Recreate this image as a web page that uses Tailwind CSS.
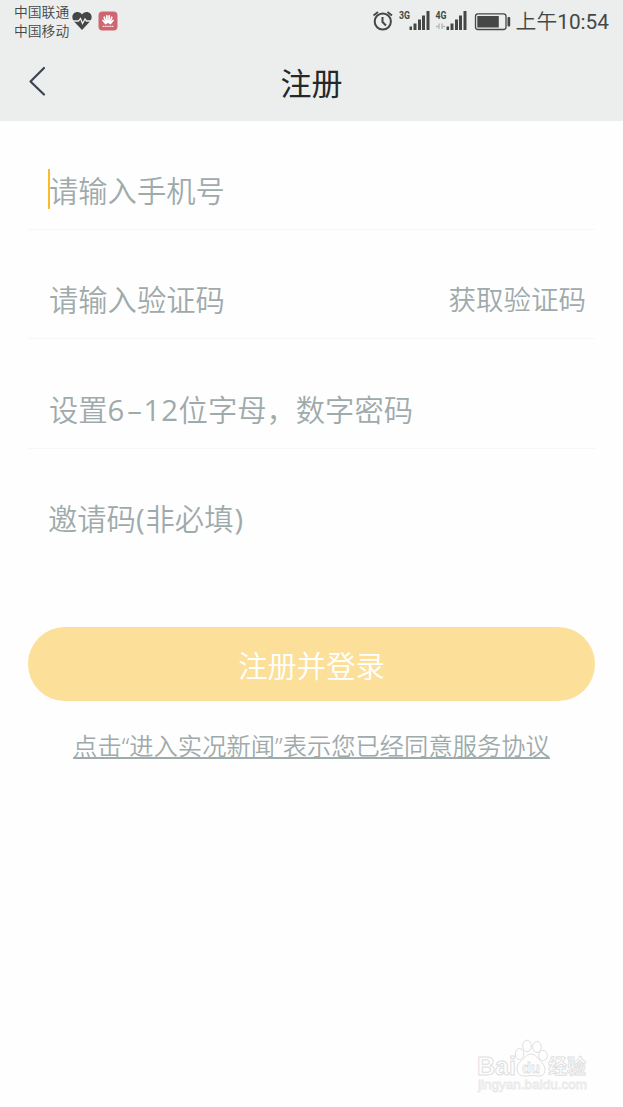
<!DOCTYPE html>
<html lang="zh-CN">
<head>
<meta charset="utf-8">
<title>注册</title>
<script src="https://cdn.jsdelivr.net/npm/@tailwindcss/browser@4"></script>
</head>
<body class="bg-[#fefefe] w-[623px] h-[1107px] overflow-hidden font-['Noto_Sans','Noto_Sans_CJK_SC',sans-serif] text-[#9faaab] whitespace-nowrap">
<header class="bg-[#ebeeed] h-[121px] flex flex-col">
  <div class="h-[42px] flex items-center justify-between pl-[14px] pr-[14px] text-[#454746]">
    <div class="flex items-center">
      <div class="text-[13.8px] leading-[18.5px] pt-[1px] font-[350]"><div>中国联通</div><div>中国移动</div></div>
      <svg class="ml-[3px]" width="20" height="20" viewBox="0 0 20 20"><path d="M10 19 2 10.5C-1.5 6 1 1 5.5 1 7.500 1 9 2 10 3.500 11 2 12.500 1 14.500 1 19 1 21.500 6 18 10.500Z" fill="#454746"/><path d="M1 10H6.500L8.500 7.500 10.500 12.500 13 8 14.500 10H19" fill="none" stroke="#ebeeed" stroke-width="1.300"/></svg>
      <svg class="ml-[6px]" width="20" height="20" viewBox="0 0 20 20"><rect x=".5" y=".5" width="19" height="19" rx="4" fill="#ce6672"/><g fill="none" stroke="#fff" stroke-width="1.700" stroke-linecap="round"><path d="M9.200 11.500 8.800 4.800M10.800 11.500 11.200 4.800M8.300 12 6.200 6.200M11.700 12 13.800 6.200M7.600 12.500 5 9.500M12.400 12.500 15 9.500"/></g><path d="M4.500 15.300H15.500" stroke="#fff" stroke-width="1.300" stroke-dasharray="1.500 .4" opacity=".8"/></svg>
    </div>
    <div class="flex items-center">
      <svg width="140" height="26" viewBox="371 8 140 26" fill="none" stroke="#454746">
        <circle cx="382.800" cy="21.500" r="8.100" stroke-width="2"/><path d="M382.500 17V22L386 25.500" stroke-width="2"/><path d="M373.500 15.500 378 12M387.500 12 392 15.500" stroke-width="1.800"/>
        <g stroke="none" fill="#454746">
          <text x="399" y="19.200" font-family="Roboto" font-weight="700" font-size="10.500" textLength="11" lengthAdjust="spacingAndGlyphs">3G</text>
          <path d="M409.500 26.500h2.500v3.500h-2.500zM413.500 23.500h3v6.500h-3zM418 19.500h3v10.500h-3zM422 15.500h3v14.500h-3zM426.500 11h3v19h-3z"/>
          <text x="435.500" y="19.200" font-family="Roboto" font-weight="700" font-size="10.500" textLength="11" lengthAdjust="spacingAndGlyphs">4G</text>
          <path d="M446.500 26.500h2.500v3.500h-2.500zM450.500 23.500h3v6.500h-3zM455 19.500h3v10.500h-3zM459 15.500h3v14.500h-3zM463.500 11h3v19h-3z"/>
          <rect x="477.300" y="16" width="21.500" height="11.500"/><rect x="507.500" y="17" width="2.700" height="9.500" rx="1"/>
        </g>
        <rect x="475.500" y="13.800" width="30.500" height="15.700" rx="2.500" stroke-width="1.300"/>
        <path d="M436 26.500H439.500M439 23.500V29M442 23.500V29M441.500 26.500H445" stroke="#b7bab9" stroke-width="1.400"/>
      </svg>
      <div class="ml-[5px] pt-[2px] text-[20.8px] leading-[28px] font-['Roboto','Noto_Sans_CJK_SC',sans-serif]"><span class="font-[350]">上午</span>10:54</div>
    </div>
  </div>
  <div class="flex-1 grid grid-cols-[60px_1fr_60px] items-center pb-[1px]">
    <svg class="ml-[27px]" width="20" height="32" viewBox="0 0 20 32"><path d="M17 3 3.500 16.500 17 29.500" fill="none" stroke="#3b4250" stroke-width="2.200" stroke-linecap="round" stroke-linejoin="round"/></svg>
    <h1 class="text-center text-[31px] leading-[40px] text-[#262827] pt-[3px]">注册</h1>
  </div>
</header>
<main class="px-[28px] text-[29.3px] leading-[40px] font-[350]">
  <div class="h-[109px] border-b border-[#f7f7f7] pt-[48px] pl-[20px] flex"><span class="w-[2px] h-[40px] bg-[#fbbc2c] -mr-[1px]"></span><span class="pt-[2px]">请输入手机号</span></div>
  <div class="h-[109px] border-b border-[#f7f7f7] pt-[50px] pl-[21px] pr-[9px] flex justify-between"><span>请输入验证码</span><span class="text-[27.5px]">获取验证码</span></div>
  <div class="h-[110px] border-b border-[#f7f7f7] pt-[51px] pl-[21px] flex"><span>设置</span><span class="w-[18px] font-['Open_Sans'] font-normal">6</span><span class="w-[18px] text-center font-['Open_Sans'] font-normal">–</span><span class="w-[35px] tracking-[1px] font-['Open_Sans'] font-normal">12</span><span>位字母，数字密码</span></div>
  <div class="h-[178px] pt-[50px] pl-[20px]">邀请码<span class="tracking-[1px] font-['Open_Sans'] font-normal">(</span>非必填<span class="pl-[1px] font-['Open_Sans'] font-normal">)</span></div>
  <button class="w-[567px] h-[74px] rounded-full bg-[#fcdf98] text-white block text-center pt-[3px]">注册并登录</button>
  <p class="text-center text-[24.3px] leading-[32px] pt-[29px]"><a class="underline decoration-[1.500px] underline-offset-[2px]">点击“进入实况新闻”表示您已经同意服务协议</a></p>
</main>
<svg class="absolute left-[470px] top-[1035px]" width="130" height="62" viewBox="470 1035 130 62" fill="#fefefe" stroke="#dfdfdf" stroke-width="1">
  <ellipse cx="519.500" cy="1054" rx="4.300" ry="5.500"/><ellipse cx="527" cy="1046" rx="4.300" ry="5.800"/><ellipse cx="537" cy="1047" rx="4.300" ry="5.500"/><ellipse cx="543" cy="1055.500" rx="4.300" ry="5.200"/>
  <path d="M531 1054C526 1054 524 1059 520 1062 515 1066 516 1076 524 1076 528 1076 534 1075 538 1076 546 1077 547 1067 542 1063 538 1059 536 1054 531 1054Z"/>
  <g font-family="Liberation Sans, Noto Sans CJK SC, sans-serif" font-weight="700">
    <text x="477" y="1075" font-size="25" textLength="39" lengthAdjust="spacingAndGlyphs">Bai</text>
    <text x="522" y="1073" font-size="15" stroke-width=".8" textLength="18" lengthAdjust="spacingAndGlyphs">du</text>
    <text x="548" y="1074" font-size="20" stroke-width=".9" textLength="38" lengthAdjust="spacingAndGlyphs">经验</text>
    <text x="478" y="1089" font-size="13" font-weight="400" stroke="#e9e9e9" stroke-width=".8" textLength="109" lengthAdjust="spacingAndGlyphs">jingyan.baidu.com</text>
  </g>
</svg>
</body>
</html>
